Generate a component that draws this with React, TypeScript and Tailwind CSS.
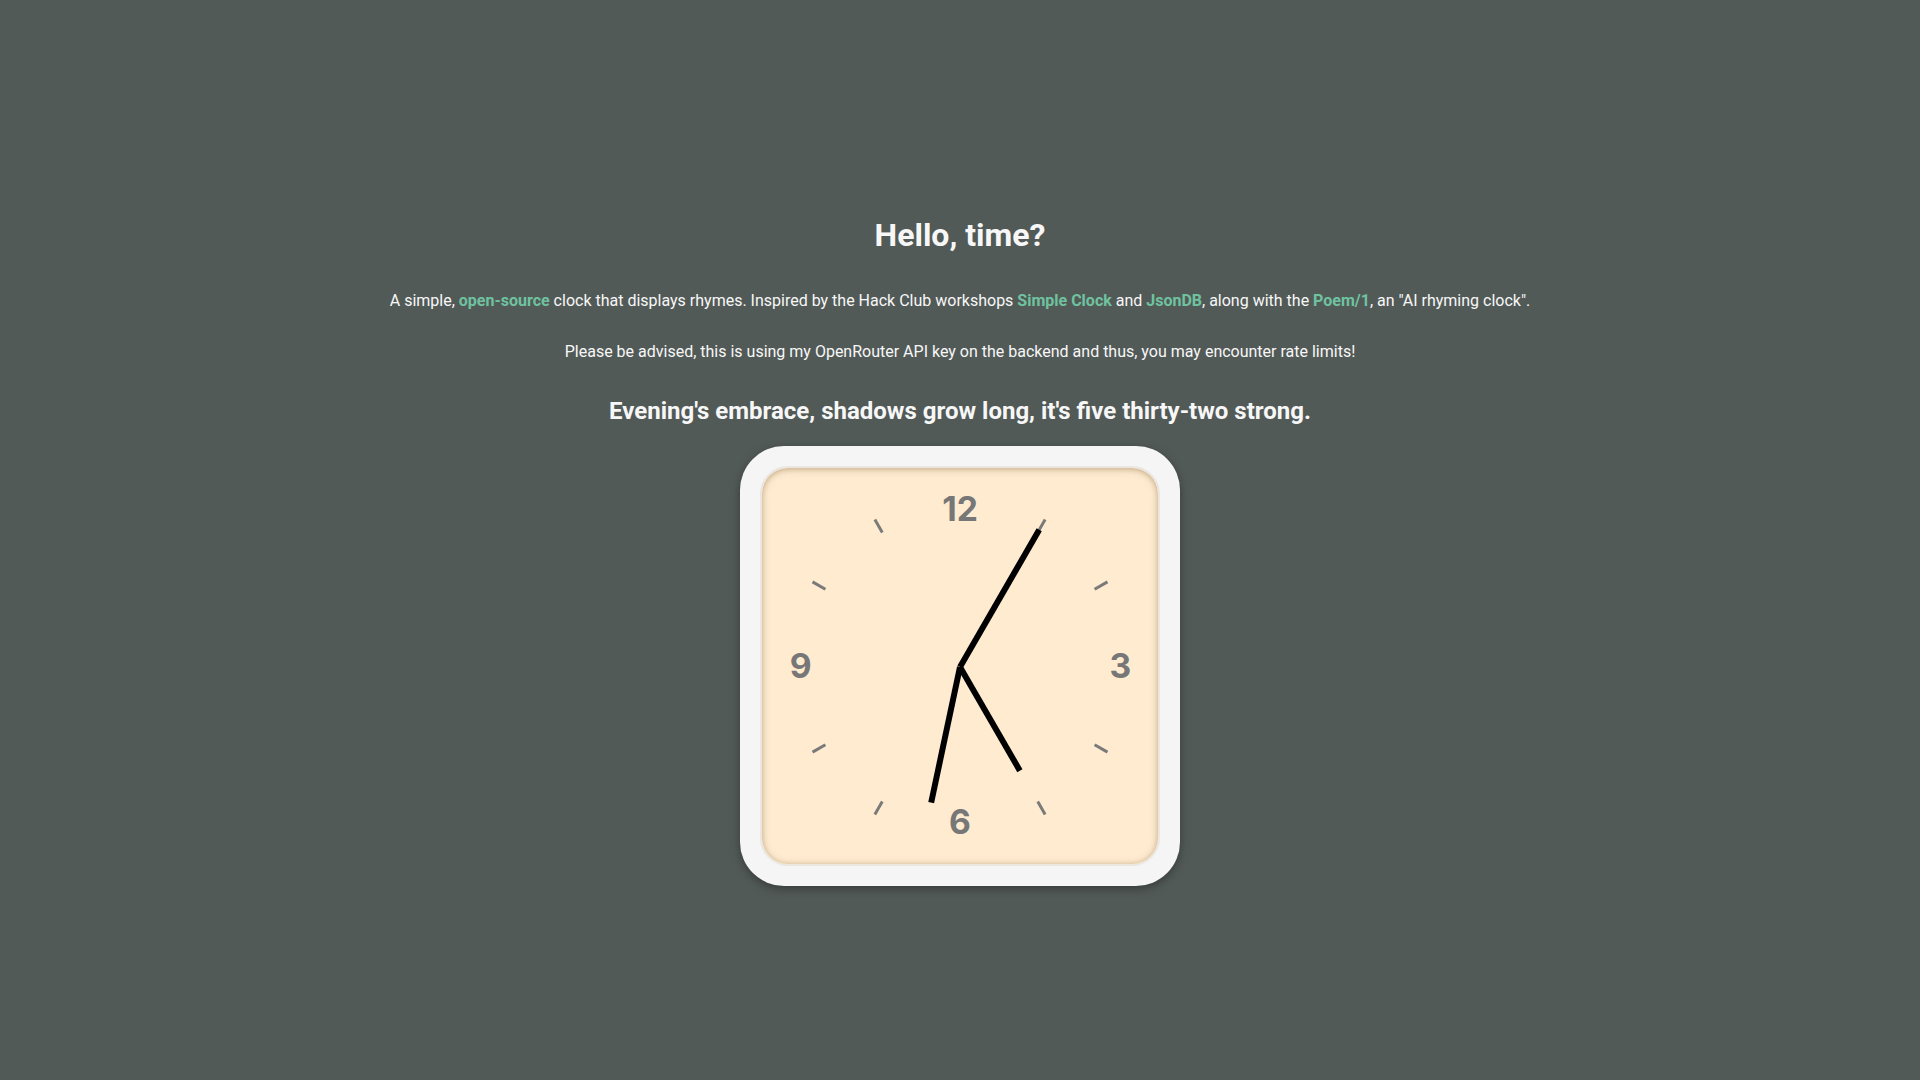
const ticks = [30, 60, 120, 150, 210, 240, 300, 330];

const numerals = [
  { label: '12', x: 200, y: 40 },
  { label: '3', x: 362, y: 199 },
  { label: '6', x: 200, y: 356 },
  { label: '9', x: 39, y: 199 },
];

const point = (deg: number, r: number) => {
  const rad = (deg * Math.PI) / 180;
  return { x: 200 + r * Math.sin(rad), y: 200 - r * Math.cos(rad) };
};

const Hand = ({ deg, length }: { deg: number; length: number }) => {
  const end = point(deg, length);
  return <line x1={200} y1={200} x2={end.x} y2={end.y} stroke="#000" strokeWidth={6} />;
};

const Clock = () => {
  return (
    <div className="w-[440px] h-[440px] bg-[#f5f5f5] rounded-[44px] p-5 shadow-[0_3px_10px_rgba(0,0,0,0.35)]">
      <div className="w-full h-full rounded-[28px] bg-[#ffecd0] border-2 border-[#ebe7e0] shadow-[inset_0_1px_7px_rgba(120,90,50,0.5)]">
        <svg width="396" height="396" viewBox="0 -1 400 400">
          {ticks.map((deg) => {
            const a = point(deg, 157);
            const b = point(deg, 172);
            return <line key={deg} x1={a.x} y1={a.y} x2={b.x} y2={b.y} stroke="#7a7a7a" strokeWidth={3} />;
          })}
          {numerals.map((n) => (
            <text
              key={n.label}
              x={n.x}
              y={n.y}
              textAnchor="middle"
              dominantBaseline="central"
              fill="#777"
              fontSize="34"
              fontWeight="700"
              fontFamily="Inter, 'Open Sans', sans-serif"
            >
              {n.label}
            </text>
          ))}
          <Hand deg={150} length={121} />
          <Hand deg={192} length={140} />
          <Hand deg={30} length={160} />
        </svg>
      </div>
    </div>
  );
};

const App = () => {
  return (
    <div className="min-h-screen bg-[#525a57] text-[#f7f7f7] font-['Roboto',sans-serif] flex flex-col items-center pt-[215px]">
      <h1 className="text-[32px] leading-[40px] font-bold">Hello, time?</h1>
      <p className="text-base leading-6 mt-[34px]">
        A simple, <span className="text-[#6fc2a0] font-bold">open-source</span> clock that displays rhymes. Inspired by
        the Hack Club workshops <span className="text-[#6fc2a0] font-bold">Simple Clock</span> and{' '}
        <span className="text-[#6fc2a0] font-bold">JsonDB</span>, along with the{' '}
        <span className="text-[#6fc2a0] font-bold">Poem/1</span>, an "AI rhyming clock".
      </p>
      <p className="text-base leading-6 mt-[27px]">
        Please be advised, this is using my OpenRouter API key on the backend and thus, you may encounter rate limits!
      </p>
      <h2 className="text-2xl leading-8 font-bold mt-[31px]">
        Evening's embrace, shadows grow long, it's five thirty-two strong.
      </h2>
      <div className="mt-[19px] mb-40">
        <Clock />
      </div>
    </div>
  );
};

export default App;
